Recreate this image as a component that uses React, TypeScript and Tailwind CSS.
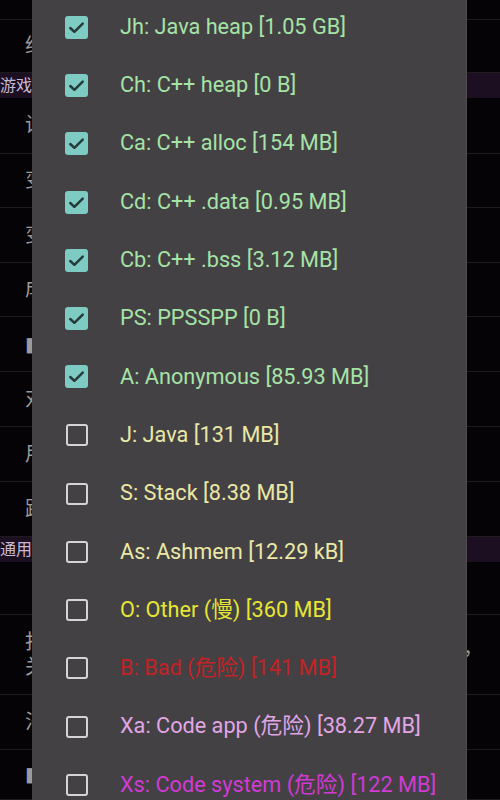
import React from "react";

/**
 * Datas
 */
type Item = { label: string; checked: boolean; color: string };

const items: Item[] = [
  { label: "Jh: Java heap [1.05 GB]", checked: true, color: "text-[#a6e3a6]" },
  { label: "Ch: C++ heap [0 B]", checked: true, color: "text-[#a6e3a6]" },
  { label: "Ca: C++ alloc [154 MB]", checked: true, color: "text-[#a6e3a6]" },
  { label: "Cd: C++ .data [0.95 MB]", checked: true, color: "text-[#a6e3a6]" },
  { label: "Cb: C++ .bss [3.12 MB]", checked: true, color: "text-[#a6e3a6]" },
  { label: "PS: PPSSPP [0 B]", checked: true, color: "text-[#a6e3a6]" },
  { label: "A: Anonymous [85.93 MB]", checked: true, color: "text-[#a6e3a6]" },
  { label: "J: Java [131 MB]", checked: false, color: "text-[#ebe8a6]" },
  { label: "S: Stack [8.38 MB]", checked: false, color: "text-[#ebe8a6]" },
  { label: "As: Ashmem [12.29 kB]", checked: false, color: "text-[#ebe8a6]" },
  { label: "O: Other (慢) [360 MB]", checked: false, color: "text-[#e6e635]" },
  { label: "B: Bad (危险) [141 MB]", checked: false, color: "text-[#c42226]" },
  { label: "Xa: Code app (危险) [38.27 MB]", checked: false, color: "text-[#e2a6e6]" },
  { label: "Xs: Code system (危险) [122 MB]", checked: false, color: "text-[#d23ad6]" },
];

const font = { fontFamily: "Roboto, 'Noto Sans CJK SC', sans-serif" };

/**
 * Background rows (mostly hidden behind the dialog)
 */
function BgRow({ h, text, right }: { h: string; text?: string; right?: string }) {
  return (
    <div className={`${h} border-b border-[#1d1b1e] flex items-center justify-between px-[25px] text-[20px] text-[#9c9a9c]`}>
      <span className="leading-[25px] whitespace-pre">{text}</span>
      {right && <span className="mr-[-8px] mt-[-14px]">{right}</span>}
    </div>
  );
}

function Band({ text }: { text: string }) {
  return (
    <div className="h-[25px] bg-[#1c0f22] flex items-center text-[16px] text-[#c9b9d3]">
      <span>{text}</span>
    </div>
  );
}

function CheckBox({ checked }: { checked: boolean }) {
  if (!checked)
    return <div className="w-[22px] h-[22px] rounded-[3px] border-2 border-[#d4d4d4]" />;
  return (
    <div className="w-[23px] h-[23px] rounded-[3px] bg-[#7ecbc3] flex items-center justify-center">
      <svg width="23" height="23" viewBox="0 0 24 24" fill="none">
        <path d="M5.5 12.5 L9.8 16.5 L18.5 8" stroke="#263b39" strokeWidth="2.6" strokeLinecap="round" strokeLinejoin="round" />
      </svg>
    </div>
  );
}

/**
 * Page
 */
export default function App() {
  return (
    <div className="relative w-[500px] h-[800px] overflow-hidden bg-[#050306]" style={font}>
      <div className="flex flex-col">
        <BgRow h="h-[20px]" />
        <BgRow h="h-[53px]" text="给" />
        <Band text="游戏" />
        <BgRow h="h-[56px]" text="设" />
        <BgRow h="h-[54px]" text="变" />
        <BgRow h="h-[55px]" text="变" />
        <BgRow h="h-[54px]" text="成" />
        <BgRow h="h-[55px]" text="▮" />
        <BgRow h="h-[55px]" text="对" />
        <BgRow h="h-[55px]" text="用" />
        <BgRow h="h-[55px]" text="距" />
        <Band text="通用" />
        <BgRow h="h-[53px]" />
        <BgRow h="h-[80px]" text={"打\n关"} right="兑，" />
        <BgRow h="h-[55px]" text="法" />
        <BgRow h="h-[50px]" text="▮" />
      </div>

      {/* dialog */}
      <div className="absolute top-0 bottom-0 left-[32px] w-[435px] bg-[#434144] border-r border-[#4f4d50]">
        <div className="flex flex-col mt-[-2px]">
          {items.map((it) => (
            <div key={it.label} className="h-[58.3px] flex items-center pl-[33px]">
              <div className="w-[23px] flex justify-center">
                <CheckBox checked={it.checked} />
              </div>
              <span className={`ml-[32px] text-[21.7px] whitespace-nowrap ${it.color}`}>{it.label}</span>
            </div>
          ))}
        </div>
      </div>
    </div>
  );
}
